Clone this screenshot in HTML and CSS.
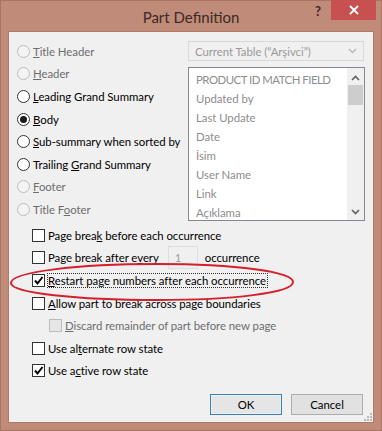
FILE: index.html
```html
<!DOCTYPE html>
<html>
<head>
<meta charset="utf-8">
<link rel="stylesheet" href="styles.css">
</head>
<body>
<div class="win">
  <div class="titlebar">
    <div class="title">Part Definition</div>
    <div class="controls">
      <span class="help">?</span>
      <span class="close"><svg width="10" height="10" viewBox="0 0 10 10"><path d="M1 1L9 9M9 1L1 9" stroke="#fff" stroke-width="1.8"/></svg></span>
    </div>
  </div>
  <div class="client">
    <div class="top">
      <div class="radios">
        <div class="row dis"><span class="radio"></span><span><u>T</u>itle Header</span></div>
        <div class="row dis"><span class="radio"></span><span><u>H</u>eader</span></div>
        <div class="row"><span class="radio"></span><span><u>L</u>eading Grand Summary</span></div>
        <div class="row"><span class="radio on"></span><span><u>B</u>ody</span></div>
        <div class="row"><span class="radio"></span><span><u>S</u>ub-summary when sorted by</span></div>
        <div class="row"><span class="radio"></span><span>Trailing <u>G</u>rand Summary</span></div>
        <div class="row dis"><span class="radio"></span><span><u>F</u>ooter</span></div>
        <div class="row dis"><span class="radio"></span><span>Title F<u>o</u>oter</span></div>
      </div>
      <div class="side">
        <div class="combo"><span>Current Table (“Arşivci”)</span><svg width="9" height="6" viewBox="0 0 9 6"><path d="M1 1L4.5 4.5L8 1" fill="none" stroke="#b8b8b8" stroke-width="1.4"/></svg></div>
        <div class="list">
          <div class="items">
            <div class="caps">PRODUCT ID MATCH FIELD</div>
            <div>Updated by</div>
            <div>Last Update</div>
            <div>Date</div>
            <div>İsim</div>
            <div>User Name</div>
            <div>Link</div>
            <div>Açıklama</div>
          </div>
          <div class="sb">
            <svg class="arr" width="9" height="6" viewBox="0 0 9 6"><path d="M1 5L4.5 1.5L8 5" fill="none" stroke="#606060" stroke-width="1.6"/></svg>
            <div class="thumb"></div>
            <div class="track"></div>
            <svg class="arr" width="9" height="6" viewBox="0 0 9 6"><path d="M1 1L4.5 4.5L8 1" fill="none" stroke="#606060" stroke-width="1.6"/></svg>
          </div>
        </div>
      </div>
    </div>
    <div class="checks">
      <div class="row"><span class="cb"></span><span>Page brea<u>k</u> before each occurrence</span></div>
      <div class="row"><span class="cb"></span><span>Page break after e<u>v</u>ery</span><span class="num">1</span><span class="occ">occurrence</span></div>
      <div class="row"><span class="cb on"><svg width="11" height="11" viewBox="0 0 11 11"><path d="M2 5.5L4.5 8.5L9.5 2" fill="none" stroke="#000" stroke-width="2"/></svg></span><span class="focus"><u>R</u>estart page numbers after each occurrence</span></div>
      <div class="row"><span class="cb"></span><span><u>A</u>llow part to break across page boundaries</span></div>
      <div class="row sub dis"><span class="cb"></span><span><u>D</u>iscard remainder of part before new page</span></div>
      <div class="row"><span class="cb"></span><span>Use al<u>t</u>ernate row state</span></div>
      <div class="row"><span class="cb on"><svg width="11" height="11" viewBox="0 0 11 11"><path d="M2 5.5L4.5 8.5L9.5 2" fill="none" stroke="#000" stroke-width="2"/></svg></span><span>Use a<u>c</u>tive row state</span></div>
    </div>
    <div class="buttons">
      <button class="btn def">OK</button>
      <button class="btn">Cancel</button>
    </div>
    <svg class="grip" width="8" height="8" viewBox="0 0 8 8"><g fill="#b8b8b8"><rect x="6" y="0" width="2" height="2"/><rect x="3" y="3" width="2" height="2"/><rect x="6" y="3" width="2" height="2"/><rect x="0" y="6" width="2" height="2"/><rect x="3" y="6" width="2" height="2"/><rect x="6" y="6" width="2" height="2"/></g></svg>
  </div>
  <svg class="ellipse" width="300" height="44" viewBox="0 0 300 44"><path d="M150 4 C230 4 286 12 286 22 C286 33 225 40 150 40 C70 40 4 33 4 23 C4 12 70 4 150 4 Z" fill="none" stroke="#d41f2c" stroke-width="2"/></svg>
</div>
</body>
</html>
```

FILE: styles.css
```css
* { box-sizing: border-box; }
html, body { margin: 0; padding: 0; }
body { width: 382px; height: 431px; overflow: hidden; font-family: Lato, "Noto Sans", sans-serif; }
.win {
  position: relative;
  width: 382px; height: 431px;
  background: #c08b79;
  border: 1px solid #a97563;
  display: flex; flex-direction: column;
}
.titlebar { height: 30px; display: grid; flex: none; }
.title, .controls { grid-area: 1 / 1; }
.title { text-align: center; font-size: 15px; color: #3b2a24; line-height: 32px; }
.controls { justify-self: end; display: flex; align-items: flex-start; margin-right: 5px; margin-top: -1px; }
.help { font-size: 13px; font-weight: bold; color: #3b2a24; margin-right: 10px; margin-top: 3px; }
.close { width: 45px; height: 20px; background: #c75050; display: flex; align-items: center; justify-content: center; }
.client {
  position: relative;
  flex: 1;
  margin: 0 7px 7px 7px;
  background: #f0f0f0;
  border: 1px solid #b07a68;
  font-size: 11.4px;
  letter-spacing: -0.05px;
  color: #000;
}
.top { display: flex; padding-top: 8px; }
.radios { width: 179px; padding-left: 8px; }
.row { height: 22.6px; display: flex; align-items: center; white-space: nowrap; }
.dis { color: #6d6d6d; }
.radio {
  width: 13px; height: 13px; border-radius: 50%;
  border: 1px solid #333; background: #fff; margin-right: 3px; flex: none;
  display: flex; align-items: center; justify-content: center;
}
.dis .radio { border-color: #bcbcbc; background: #f4f4f4; }
.radio.on::after { content: ""; width: 7px; height: 7px; border-radius: 50%; background: #1a1a1a; }
.side { display: flex; flex-direction: column; padding-top: 1px; }
.combo {
  width: 176px; height: 20px;
  border: 1px solid #d9d9d9; background: #f0f0f0;
  display: flex; align-items: center; justify-content: space-between;
  padding: 0 6px 0 6px; color: #9a9a9a;
}
.list {
  margin-top: 6px;
  width: 177px; height: 154px;
  border: 1px solid #828790; background: #fff;
  display: flex;
}
.items { flex: 1; padding: 2px 0 0 7px; color: #8d8d8d; }
.items div { height: 19px; line-height: 19px; white-space: nowrap; }
.items .caps { letter-spacing: -0.5px; }
.sb { width: 17px; background: #f0f0f0; display: flex; flex-direction: column; align-items: center; padding: 7px 0 5px; }
.arr { flex: none; }
.thumb { width: 15px; height: 20px; background: #cdcdcd; margin-top: 4px; }
.track { flex: 1; }
.checks { padding-left: 23px; margin-top: 3px; }
.cb {
  width: 13px; height: 13px; border: 1px solid #333; background: #fff;
  margin-right: 3px; flex: none; display: flex; align-items: center; justify-content: center;
}
.cb svg { display: block; }
.sub { padding-left: 17px; }
.dis .cb { border-color: #bcbcbc; background: #e6e6e6; }
.num {
  margin-left: 9px; width: 30px; height: 23px; border: 1px solid #dedede; background: #f0f0f0;
  color: #9a9a9a; padding-left: 6px; line-height: 21px;
}
.occ { margin-left: 7px; }
.focus { outline: 1px dotted #333; outline-offset: 0; padding-right: 1px; }
.buttons { display: flex; justify-content: flex-end; gap: 9px; padding-right: 10px; margin-top: 12px; }
.btn {
  width: 72px; height: 21px; font-family: inherit; font-size: 11.4px; color: #000;
  background: #e1e1e1; border: 1px solid #adadad; padding: 0;
}
.btn.def { border-color: #3c7fb1; background: #e5e5e5; box-shadow: inset 0 0 0 1px #e5f1fb; }
.grip { position: absolute; right: 1px; bottom: 1px; }
.ellipse { position: absolute; left: 6px; top: 259px; }
```
